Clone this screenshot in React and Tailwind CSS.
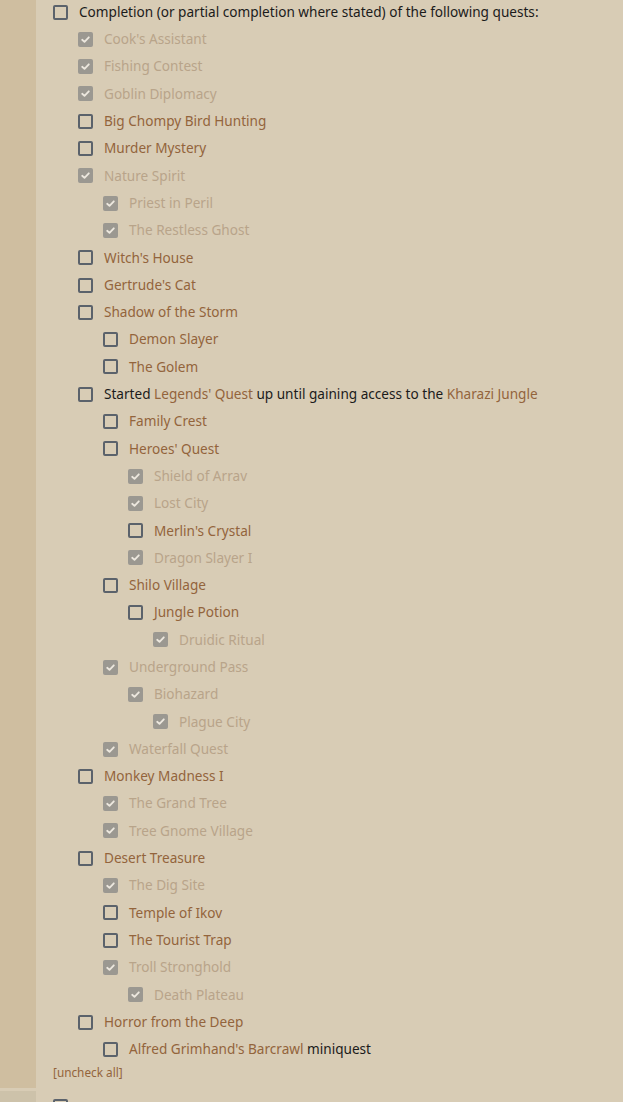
import React from 'react'

// 任务树：[层级, 名称, 已完成]
const QUESTS = [
  [1, "Cook's Assistant", true],
  [1, 'Fishing Contest', true],
  [1, 'Goblin Diplomacy', true],
  [1, 'Big Chompy Bird Hunting', false],
  [1, 'Murder Mystery', false],
  [1, 'Nature Spirit', true],
  [2, 'Priest in Peril', true],
  [2, 'The Restless Ghost', true],
  [1, "Witch's House", false],
  [1, "Gertrude's Cat", false],
  [1, 'Shadow of the Storm', false],
  [2, 'Demon Slayer', false],
  [2, 'The Golem', false],
  [1, 'LEGENDS', false],
  [2, 'Family Crest', false],
  [2, "Heroes' Quest", false],
  [3, 'Shield of Arrav', true],
  [3, 'Lost City', true],
  [3, "Merlin's Crystal", false],
  [3, 'Dragon Slayer I', true],
  [2, 'Shilo Village', false],
  [3, 'Jungle Potion', false],
  [4, 'Druidic Ritual', true],
  [2, 'Underground Pass', true],
  [3, 'Biohazard', true],
  [4, 'Plague City', true],
  [2, 'Waterfall Quest', true],
  [1, 'Monkey Madness I', false],
  [2, 'The Grand Tree', true],
  [2, 'Tree Gnome Village', true],
  [1, 'Desert Treasure', false],
  [2, 'The Dig Site', true],
  [2, 'Temple of Ikov', false],
  [2, 'The Tourist Trap', false],
  [2, 'Troll Stronghold', true],
  [3, 'Death Plateau', true],
  [1, 'Horror from the Deep', false],
  [2, 'BARCRAWL', false],
]

const INDENT = ['pl-0', 'pl-[25px]', 'pl-[50px]', 'pl-[75px]', 'pl-[100px]']

function Box({ checked }) {
  if (checked) {
    return (
      <span className="flex h-[15px] w-[15px] shrink-0 items-center justify-center rounded-[2px] bg-[#9b9891]">
        <svg viewBox="0 0 12 12" className="h-[11px] w-[11px]">
          <path d="M2.4 6.3 L4.9 8.6 L9.6 3.6" fill="none" stroke="#ece7de" strokeWidth="2" strokeLinecap="round" strokeLinejoin="round" />
        </svg>
      </span>
    )
  }
  return <span className="block h-[15px] w-[15px] shrink-0 rounded-[2px] border-2 border-[#5b626b]" />
}

function Label({ name, checked }) {
  const link = checked ? 'text-[#b8a48a]' : 'text-[#93643c]'
  if (name === 'LEGENDS') {
    return (
      <span className="text-[#1b1b1b]">
        Started <span className={link}>Legends' Quest</span> up until gaining access to the <span className={link}>Kharazi Jungle</span>
      </span>
    )
  }
  if (name === 'BARCRAWL') {
    return (
      <span className="text-[#1b1b1b]">
        <span className={link}>Alfred Grimhand's Barcrawl</span> miniquest
      </span>
    )
  }
  return <span className={link}>{name}</span>
}

function Row({ level, children, checked }) {
  return (
    <div className={`flex h-[27.3px] shrink-0 items-center gap-[11px] ${INDENT[level]}`}>
      <Box checked={checked} />
      {children}
    </div>
  )
}

export default function App() {
  return (
    <div className="flex h-[1102px] overflow-hidden bg-[#d8ccb5] text-[13.6px]" style={{ fontFamily: '"Noto Sans", sans-serif' }}>
      <div className="flex w-[36px] shrink-0 flex-col">
        <div className="h-[1088px] shrink-0 bg-[#cfbea0]" />
        <div className="h-[3px] shrink-0" />
        <div className="flex-1 bg-[#cdc2aa]" />
      </div>
      <div className="-mt-[1.6px] flex-1 pl-[17px]">
        <Row level={0} checked={false}>
          <span className="text-[#1b1b1b]">Completion (or partial completion where stated) of the following quests:</span>
        </Row>
        {QUESTS.map(([lvl, name, done], i) => (
          <Row key={i} level={lvl} checked={done}>
            <Label name={name} checked={done} />
          </Row>
        ))}
        <div className="pt-[2px] text-[11.8px] leading-[14px] text-[#93643c]">[uncheck all]</div>
        <div className="mt-[20px]">
          <span className="block h-[15px] w-[15px] rounded-[2px] border-2 border-[#5b626b]" />
        </div>
      </div>
    </div>
  )
}
